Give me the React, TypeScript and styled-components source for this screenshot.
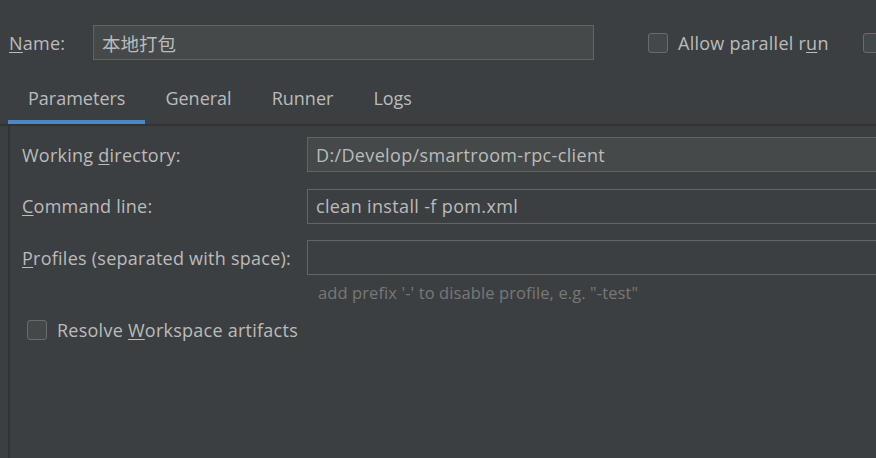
import React from "react";
import styled, { createGlobalStyle } from "styled-components";

const Global = createGlobalStyle`
  html, body { margin: 0; padding: 0; background: #3c3f41; overflow: hidden; }
  body { width: 876px; height: 458px; font-family: "Open Sans", "Noto Sans CJK SC", sans-serif; color: #bbbbbb; }
`;

const Page = styled.div`
  width: 876px;
  height: 458px;
  background: #3c3f41;
  display: flex;
  flex-direction: column;
  overflow: hidden;
`;

const TopRow = styled.div`
  display: flex;
  align-items: center;
  height: 35px;
  padding: 25px 0 0 9px;
  margin-bottom: 20px;
  white-space: nowrap;
`;

const Label = styled.span<{ $w?: number }>`
  font-size: 18px;
  letter-spacing: 0.25px;
  color: #bbbbbb;
  ${(p) => (p.$w ? `width: ${p.$w}px; flex: none;` : "")}
  white-space: nowrap;
`;

const U = styled.span`
  text-decoration: underline;
  text-decoration-thickness: 1px;
  text-underline-offset: 2px;
`;

const Field = styled.div<{ $filled?: boolean; $w?: string }>`
  box-sizing: border-box;
  height: 35px;
  width: ${(p) => p.$w || "auto"};
  flex: none;
  border: 1px solid #646464;
  background: ${(p) => (p.$filled ? "#45494a" : "#3c3f41")};
  display: flex;
  align-items: center;
  padding-left: 8px;
  font-size: 18px;
  letter-spacing: 0.35px;
  color: #bbbbbb;
  white-space: nowrap;
`;

const NameText = styled.span`
  font-family: "Noto Sans CJK SC", sans-serif;
  font-size: 18.5px;
  letter-spacing: 0;
`;

const CheckRow = styled.label`
  display: flex;
  align-items: center;
  gap: 10px;
  flex: none;
`;

const Box = styled.span`
  box-sizing: border-box;
  width: 20px;
  height: 20px;
  border: 1px solid #6b6b6b;
  border-radius: 3px;
  background: #43494a;
  flex: none;
`;

const TabStrip = styled.div`
  display: flex;
  padding-left: 8px;
  height: 44px;
  border-bottom: 2px solid #323232;
`;

const Tab = styled.div<{ $active?: boolean }>`
  box-sizing: border-box;
  padding: 0 20px 4px;
  height: 44px;
  display: flex;
  align-items: center;
  font-size: 18px;
  letter-spacing: 0;
  color: #bbbbbb;
  border-bottom: 4px solid ${(p) => (p.$active ? "#4a88c7" : "transparent")};
  margin-bottom: -2px;
`;

const Panel = styled.div`
  flex: 1;
  margin-left: 8px;
  border-left: 2px solid #323232;
  padding: 11px 0 0 12px;
  margin-right: -40px;
`;

const Form = styled.div`
  display: grid;
  grid-template-columns: 285px 1fr;
  row-gap: 16.5px;
  align-items: center;
`;

const Hint = styled.div`
  margin: 6px 0 0 296px;
  font-size: 16.5px;
  letter-spacing: 0.1px;
  color: #787878;
`;

const BottomCheck = styled(CheckRow)`
  margin: 14px 0 0 5px;
`;

export default function App() {
  return (
    <Page>
      <Global />
      <TopRow>
        <Label $w={84}>
          <U>N</U>ame:
        </Label>
        <Field $filled $w="501px">
          <NameText>本地打包</NameText>
        </Field>
        <CheckRow style={{ marginLeft: 54 }}>
          <Box />
          <Label>
            Allow parallel r<U>u</U>n
          </Label>
        </CheckRow>
        <CheckRow style={{ marginLeft: 34 }}>
          <Box />
        </CheckRow>
      </TopRow>
      <TabStrip>
        <Tab $active>Parameters</Tab>
        <Tab>General</Tab>
        <Tab>Runner</Tab>
        <Tab>Logs</Tab>
      </TabStrip>
      <Panel>
        <Form>
          <Label>
            Working <U>d</U>irectory:
          </Label>
          <Field $filled>D:/Develop/smartroom-rpc-client</Field>
          <Label>
            <U>C</U>ommand line:
          </Label>
          <Field>clean install -f pom.xml</Field>
          <Label>
            <U>P</U>rofiles (separated with space):
          </Label>
          <Field />
        </Form>
        <Hint>add prefix '-' to disable profile, e.g. "-test"</Hint>
        <BottomCheck>
          <Box />
          <Label>
            Resolve <U>W</U>orkspace artifacts
          </Label>
        </BottomCheck>
      </Panel>
    </Page>
  );
}
